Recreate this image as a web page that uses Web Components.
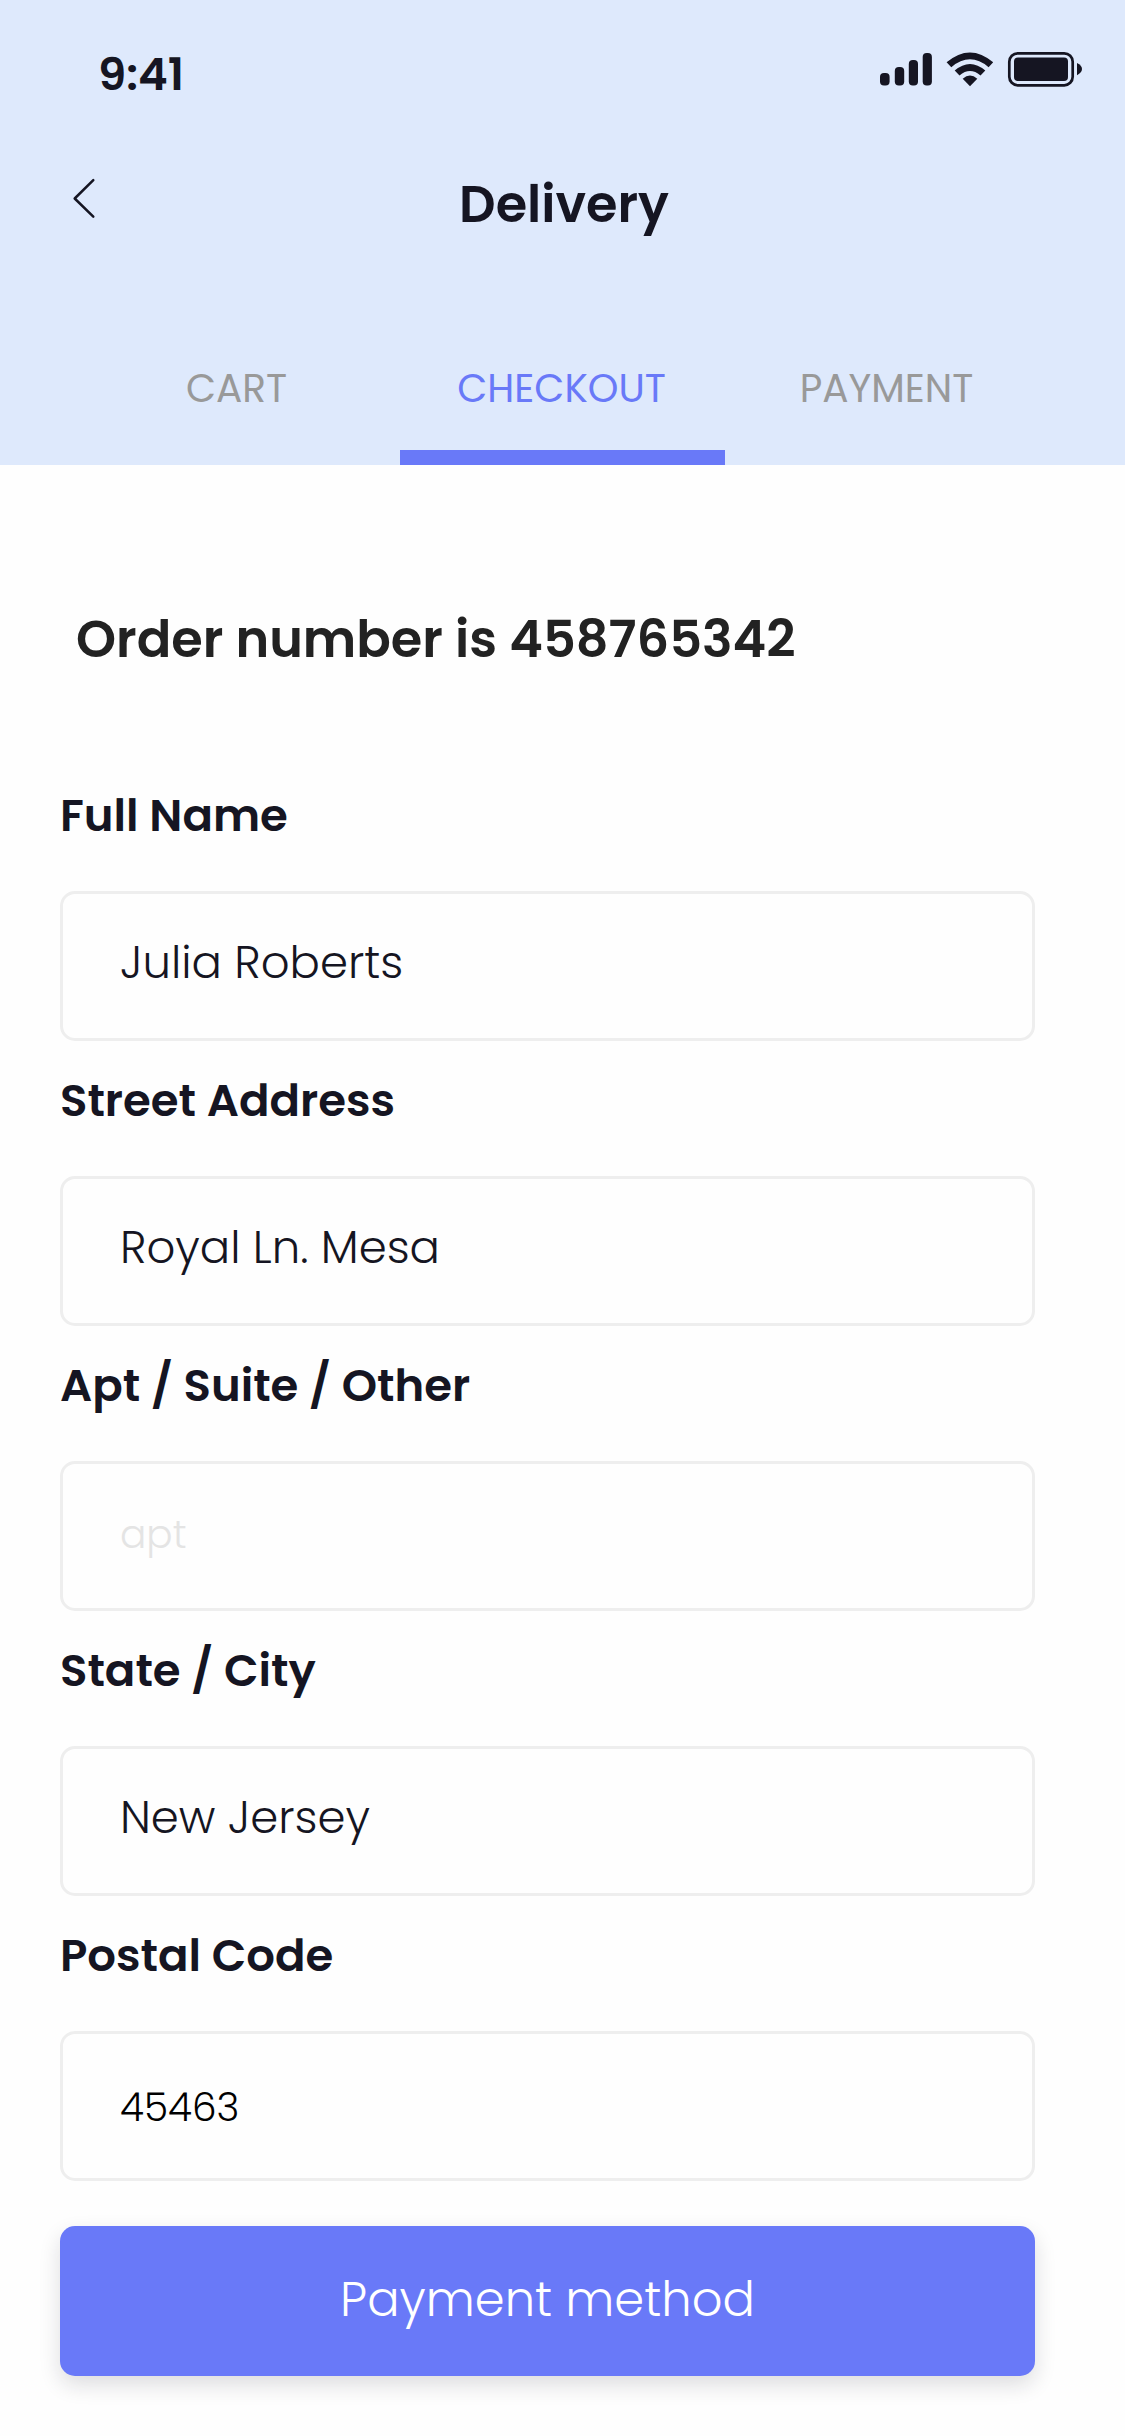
<!DOCTYPE html>
<html lang="en">
<head>
<meta charset="utf-8">
<title>Delivery</title>
<style>
  html, body { margin: 0; background: #fefefe; }
  body { width: 1125px; height: 2436px; overflow: hidden; font-family: Poppins, Inter, "Open Sans", sans-serif; color: #151522; }
</style>
</head>
<body>
<delivery-screen></delivery-screen>
<script>
const define = (name, html, ready) => {
  const template = document.createElement('template');
  template.innerHTML = html;
  customElements.define(name, class extends HTMLElement {
    connectedCallback() {
      if (this.shadowRoot) return;
      this.attachShadow({ mode: 'open' }).append(template.content.cloneNode(true));
      if (ready) ready(this);
    }
  });
};

define('text-line', `
  <style>:host { display: block; flex: none; line-height: 60px; white-space: nowrap; }</style><slot></slot>`, host => {
  host.style.fontSize = host.getAttribute('size') + 'px';
  host.style.fontWeight = host.getAttribute('weight');
});

define('status-bar', `
  <style>
    :host { display: flex; justify-content: space-between; height: 120px; box-sizing: border-box; padding: 0 42px 0 98px; }
    text-line { margin-top: 45px; }
    svg { display: block; margin-top: 48px; }
  </style>
  <text-line size="45" weight="600">9:41</text-line>
  <svg width="205" height="42" viewBox="878 48 205 42" fill="#151522">
    <rect x="880" y="73" width="9.6" height="12.6" rx="4"/>
    <rect x="894.8" y="67" width="9.4" height="18.6" rx="4"/>
    <rect x="908.8" y="60" width="9.2" height="25.6" rx="4"/>
    <rect x="922.7" y="53" width="9.2" height="32.6" rx="4"/>
    <path d="M946.6 62.3Q970 42.5 993.2 62.3L988.6 67.2Q970 51.5 951.3 67.2Z"/>
    <path d="M954.7 70.6Q970 57.4 985.3 70.6L980.5 75.4Q970 66.6 959.5 75.4Z"/>
    <path d="M962.7 78.7Q970 72.5 977.3 78.7L970 86.2Z"/>
    <rect x="1009.3" y="53.3" width="63.4" height="32" rx="8.5" fill="none" stroke="#151522" stroke-width="2.7"/>
    <rect x="1014" y="57.5" width="54" height="23.5" rx="4"/>
    <path d="M1077 63Q1082 65.5 1082 69Q1082 72.5 1077 75.2Z"/>
  </svg>`);

define('nav-bar', `
  <style>
    :host { display: grid; grid-template-columns: 101px 1fr 98px; height: 180px; }
    svg { display: block; margin: 57px 0 0 72px; }
    div { display: flex; justify-content: center; padding-top: 54.15px; }
  </style>
  <svg width="24" height="42" viewBox="66 177 24 42" fill="none" stroke="#151522" stroke-width="2.5" stroke-linecap="round" stroke-linejoin="round"><path d="M87.3 180.2L68.7 198.5L87.3 216.7"/></svg>
  <div><slot></slot></div>`);

define('tab-item', `
  <style>
    :host { display: flex; flex: 1; flex-direction: column; align-items: center; height: 165px; box-sizing: border-box; padding: 59px 2px 0 0; color: #999; }
    :host([active]) { color: #6979f8; border-bottom: 15px solid #6979f8; }
  </style><slot></slot>`);

define('tab-bar', `
  <style>:host { display: flex; padding: 0 75px; }</style><slot></slot>`);

define('form-field', `
  <style>
    :host { display: block; height: 285px; box-sizing: border-box; }
    .label { height: 135px; box-sizing: border-box; padding-top: 30px; }
    .box { height: 150px; box-sizing: border-box; border: 3px solid #eee; border-radius: 15px; padding: var(--drop, 39px) 0 0 57px; color: var(--ink, #151522); }
  </style>
  <div class="label"><slot name="label"></slot></div>
  <div class="box"><slot></slot></div>`);

define('action-button', `
  <style>
    :host { display: block; }
    button { all: unset; display: flex; justify-content: center; width: 100%; height: 150px; box-sizing: border-box; padding-top: 44px; border-radius: 15px; background: #6979f8; color: #fff; box-shadow: 0 9px 21px rgba(21,21,34,.14); }
  </style><button><slot></slot></button>`);

define('delivery-screen', `
  <style>
    :host { display: block; }
    header { height: 465px; background: #dee9fc; }
    main { padding: 0 90px 0 60px; }
    h1 { margin: 0; padding: 143.7px 0 0 16px; height: 291px; box-sizing: border-box; font: inherit; color: #222; }
    action-button { margin-top: 45px; }
  </style>
  <header>
    <status-bar></status-bar>
    <nav-bar><text-line size="51" weight="600">Delivery</text-line></nav-bar>
    <tab-bar>
      <tab-item><text-line size="39" weight="400">CART</text-line></tab-item>
      <tab-item active><text-line size="39" weight="400">CHECKOUT</text-line></tab-item>
      <tab-item><text-line size="39" weight="400">PAYMENT</text-line></tab-item>
    </tab-bar>
  </header>
  <main>
    <h1><text-line size="51" weight="600">Order number is 458765342</text-line></h1>
    <form-field>
      <text-line slot="label" size="45" weight="600">Full Name</text-line>
      <text-line size="45" weight="300">Julia Roberts</text-line>
    </form-field>
    <form-field>
      <text-line slot="label" size="45" weight="600">Street Address</text-line>
      <text-line size="45" weight="300">Royal Ln. Mesa</text-line>
    </form-field>
    <form-field style="--drop:41px;--ink:#e4e4e4">
      <text-line slot="label" size="45" weight="600">Apt / Suite / Other</text-line>
      <text-line size="39" weight="300">apt</text-line>
    </form-field>
    <form-field>
      <text-line slot="label" size="45" weight="600">State / City</text-line>
      <text-line size="45" weight="300">New Jersey</text-line>
    </form-field>
    <form-field style="--drop:44px;--ink:#000">
      <text-line slot="label" size="45" weight="600">Postal Code</text-line>
      <text-line size="39" weight="300">45463</text-line>
    </form-field>
    <action-button><text-line size="48" weight="300">Payment method</text-line></action-button>
  </main>`);
</script>
</body>
</html>
